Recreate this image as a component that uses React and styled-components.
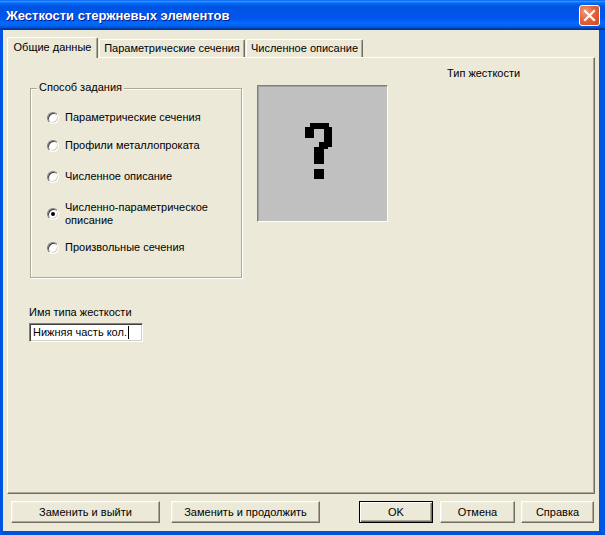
import React from "react";
import styled, { createGlobalStyle } from "styled-components";

const Global = createGlobalStyle`
  html, body { margin: 0; padding: 0; background: #ffffff; }
  body { font-family: "Liberation Sans", Arial, sans-serif; font-size: 11px; color: #000; }
  * { box-sizing: border-box; }
`;

const Window = styled.div`
  width: 605px;
  height: 535px;
  display: flex;
  flex-direction: column;
  overflow: hidden;
`;

const TitleBar = styled.div`
  height: 30px;
  flex: none;
  display: flex;
  align-items: center;
  padding: 1px 6px 0 6px;
  background: linear-gradient(
    to bottom,
    #0058ee 0%, #3593ff 4%, #288eff 6%, #127dff 8%, #036ffc 10%,
    #0262ee 14%, #0057e5 20%, #0054e3 24%, #0055eb 56%, #005bf5 66%,
    #026afe 76%, #0062ef 86%, #0052d6 92%, #0040ab 94%, #003092 100%
  );
`;

const TitleText = styled.div`
  flex: 1;
  color: #ffffff;
  font-family: "Liberation Sans", Arial, sans-serif;
  font-weight: bold;
  font-size: 13px;
  text-shadow: 1px 1px 0 #0a1883;
  white-space: nowrap;
`;

const CloseButton = styled.div`
  width: 21px;
  height: 21px;
  margin-right: -1px;
  border: 1px solid #ffffff;
  border-radius: 3px;
  background: radial-gradient(circle at 30% 30%, #f39a7e 0%, #e2643c 45%, #cc4a20 100%);
  display: flex;
  align-items: center;
  justify-content: center;
`;

const Frame = styled.div`
  flex: 1;
  display: flex;
  border-left: 3px solid #0055e5;
  border-right: 6px solid #0055e5;
  border-bottom: 4px solid #0052dc;
  min-height: 0;
`;

const Body = styled.div`
  flex: 1;
  background: #ece9d8;
  display: flex;
  flex-direction: column;
  padding: 7px 4px 8px 4px;
`;

const TabStrip = styled.div`
  height: 20px;
  flex: none;
  display: flex;
  align-items: flex-end;
  position: relative;
  z-index: 1;
`;

const Tab = styled.div`
  width: ${(p) => p.$w}px;
  height: ${(p) => (p.$active ? 21 : 18)}px;
  margin-right: ${(p) => (p.$gap ?? 1)}px;
  margin-bottom: ${(p) => (p.$active ? -1 : 0)}px;
  background: #ece9d8;
  border-top: 1px solid #ffffff;
  border-left: 1px solid #ffffff;
  border-right: 1px solid #716f64;
  border-radius: 2px 2px 0 0;
  box-shadow: inset -1px 0 0 #aca899;
  display: flex;
  align-items: flex-start;
  justify-content: center;
  padding-top: ${(p) => (p.$active ? 3 : 2)}px;
  line-height: 13px;
  white-space: nowrap;
`;

const Panel = styled.div`
  flex: 1;
  display: flex;
  flex-direction: column;
  border-top: 1px solid #ffffff;
  border-left: 1px solid #ffffff;
  border-right: 1px solid #716f64;
  border-bottom: 1px solid #716f64;
  box-shadow: inset -1px -1px 0 #aca899;
  padding: 0 0 0 21px;
`;

const TopRow = styled.div`
  display: flex;
  align-items: flex-start;
`;

const GroupBox = styled.div`
  position: relative;
  width: 212px;
  height: 190px;
  margin: 30px 0 0 1px;
  border: 1px solid #aca899;
  box-shadow: inset 1px 1px 0 #ffffff, 1px 1px 0 #ffffff;
`;

const Legend = styled.span`
  position: absolute;
  top: -8px;
  left: 6px;
  padding: 0 2px;
  background: #ece9d8;
  line-height: 13px;
  white-space: nowrap;
`;

const RadioList = styled.div`
  display: flex;
  flex-direction: column;
  padding: 22px 0 0 16px;
`;

const RadioRow = styled.div`
  display: flex;
  align-items: center;
  gap: 6px;
  margin-top: ${(p) => p.$top}px;
  line-height: 13px;
`;

const RadioCircle = styled.span`
  flex: none;
  width: 12px;
  height: 12px;
  border-radius: 50%;
  background: #ffffff;
  border: 1px solid;
  border-color: #808080 #ffffff #ffffff #808080;
  box-shadow: inset 1px 1px 0 #404040, inset -1px -1px 0 #d4d0c8;
  display: flex;
  align-items: center;
  justify-content: center;
  &::after {
    content: "";
    width: 4px;
    height: 4px;
    border-radius: 50%;
    background: ${(p) => (p.$checked ? "#000" : "transparent")};
  }
`;

const ImageBox = styled.div`
  width: 131px;
  height: 137px;
  margin: 27px 0 0 15px;
  background: #c0c0c0;
  border: 1px solid;
  border-color: #808080 #ffffff #ffffff #808080;
  box-shadow: inset 1px 1px 0 #a0a0a0;
  flex: none;
`;

const TypeLabel = styled.div`
  margin: 9px 0 0 59px;
  line-height: 13px;
  white-space: nowrap;
`;

const FieldLabel = styled.div`
  margin-top: 28px;
  line-height: 13px;
`;

const TextField = styled.div`
  width: 114px;
  height: 19px;
  margin-top: 4px;
  background: #ffffff;
  border: 1px solid;
  border-color: #808080 #ffffff #ffffff #808080;
  box-shadow: inset 1px 1px 0 #404040, inset -1px -1px 0 #d4d0c8;
  display: flex;
  align-items: center;
  padding-left: 3px;
  line-height: 13px;
  white-space: nowrap;
`;

const Caret = styled.span`
  display: inline-block;
  width: 1px;
  height: 13px;
  background: #000;
  margin-left: 1px;
`;

const ButtonRow = styled.div`
  height: 22px;
  margin-top: 7px;
  flex: none;
  display: flex;
`;

const Button = styled.div`
  width: ${(p) => p.$w}px;
  height: 22px;
  margin-left: ${(p) => p.$ml || 0}px;
  background: #ece9d8;
  display: flex;
  align-items: center;
  justify-content: center;
  white-space: nowrap;
  border: 1px solid;
  border-color: ${(p) =>
    p.$default ? "#000 #000 #000 #000" : "#ffffff #716f64 #716f64 #ffffff"};
  box-shadow: ${(p) =>
    p.$default
      ? "inset 1px 1px 0 #ffffff, inset -1px -1px 0 #716f64, inset -2px -2px 0 #aca899"
      : "inset -1px -1px 0 #aca899, inset 1px 1px 0 #f1efe2"};
  line-height: 13px;
`;

const radios = [
  { label: "Параметрические сечения", top: 0 },
  { label: "Профили металлопроката", top: 15 },
  { label: "Численное описание", top: 18 },
  { label: ["Численно-параметрическое", "описание"], top: 18, checked: true },
  { label: "Произвольные сечения", top: 14 },
];

const QuestionMark = () => (
  <svg width="129" height="135" viewBox="0 0 129 135" style={{ display: "block" }}>
    <g fill="#000">
      <rect x="52" y="37" width="19" height="6" />
      <rect x="47" y="41" width="9" height="11" />
      <rect x="66" y="41" width="8" height="20" />
      <rect x="61" y="56" width="9" height="7" />
      <rect x="56" y="61" width="10" height="17" />
      <rect x="56" y="83" width="10" height="10" />
    </g>
  </svg>
);

export default function App() {
  return (
    <>
      <Global />
      <Window>
        <TitleBar>
          <TitleText>Жесткости стержневых элементов</TitleText>
          <CloseButton>
            <svg width="13" height="13" viewBox="0 0 13 13">
              <path d="M2 2 L11 11 M11 2 L2 11" stroke="#fff" strokeWidth="2.2" strokeLinecap="square" />
            </svg>
          </CloseButton>
        </TitleBar>
        <Frame>
          <Body>
            <TabStrip>
              <Tab $w={91} $active $gap={1}>Общие данные</Tab>
              <Tab $w={146} $gap={1}>Параметрические сечения</Tab>
              <Tab $w={117}>Численное описание</Tab>
            </TabStrip>
            <Panel>
              <TopRow>
                <GroupBox>
                  <Legend>Способ задания</Legend>
                  <RadioList>
                    {radios.map((r, i) => (
                      <RadioRow key={i} $top={r.top}>
                        <RadioCircle $checked={r.checked} />
                        <span>
                          {Array.isArray(r.label) ? (
                            <>
                              {r.label[0]}
                              <br />
                              {r.label[1]}
                            </>
                          ) : (
                            r.label
                          )}
                        </span>
                      </RadioRow>
                    ))}
                  </RadioList>
                </GroupBox>
                <ImageBox>
                  <QuestionMark />
                </ImageBox>
                <TypeLabel>Тип жесткости</TypeLabel>
              </TopRow>
              <FieldLabel>Имя типа жесткости</FieldLabel>
              <TextField>
                Нижняя часть кол.
                <Caret />
              </TextField>
            </Panel>
            <ButtonRow>
              <Button $w={149} $ml={4}>Заменить и выйти</Button>
              <Button $w={149} $ml={11}>Заменить и продолжить</Button>
              <Button $w={74} $ml={39} $default>OK</Button>
              <Button $w={75} $ml={7}>Отмена</Button>
              <Button $w={73} $ml={6}>Справка</Button>
            </ButtonRow>
          </Body>
        </Frame>
      </Window>
    </>
  );
}
